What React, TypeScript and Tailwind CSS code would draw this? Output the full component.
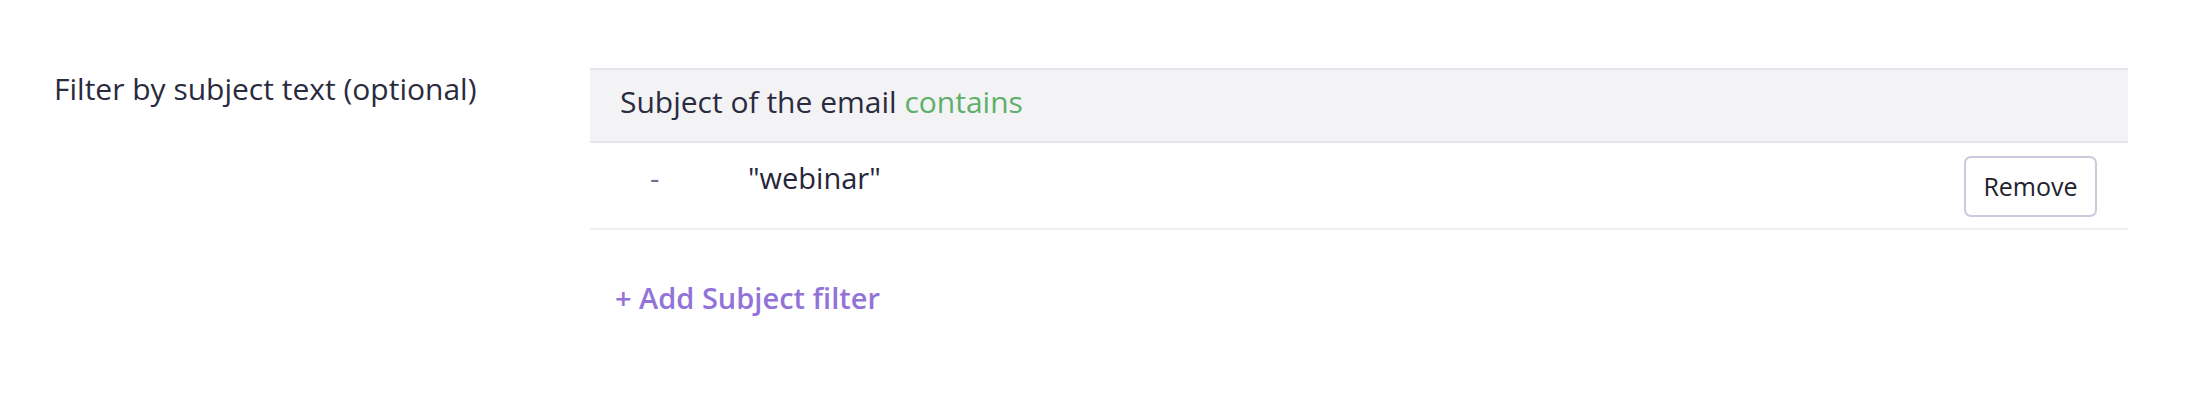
import React from 'react';

const font = { fontFamily: '"Open Sans", "Noto Sans", sans-serif' };

const SubjectFilterRow: React.FC<{ value: string }> = ({ value }) => (
    <div className="flex items-start h-[87px] border-b-2 border-[#f0f0f3]">
        <span className="w-[158px] pl-[60px] pt-[13px] text-[#6d7090] text-[29px]">-</span>
        <span className="flex-1 pt-[13px] text-[29px] text-[#25263a]">"{value}"</span>
        <button className="mt-[13px] mr-[31px] w-[133px] h-[61px] border-2 border-[#c9cadb] rounded-[7px] bg-white text-[25px] text-[#222230]">
            Remove
        </button>
    </div>
);

export default function App() {
    return (
        <div className="w-[2186px] h-[412px] bg-white flex pt-[68px]" style={font}>
            <div className="w-[590px] pl-[54px] -mt-[2px] text-[30px] text-[#2a2b3e]">
                Filter by subject text (optional)
            </div>
            <div className="w-[1538px]">
                <div className="h-[75px] pl-[30px] pt-[9px] bg-[#f3f3f6] border-y-2 border-[#e5e5ee] text-[30px] font-medium text-[#2a2b3e]">
                    Subject of the email <span className="text-[#5daf69]">contains</span>
                </div>
                <SubjectFilterRow value="webinar" />
                <button className="mt-[46px] ml-[25px] text-[29px] font-semibold text-[#9274d8]">
                    + Add Subject filter
                </button>
            </div>
        </div>
    );
}
